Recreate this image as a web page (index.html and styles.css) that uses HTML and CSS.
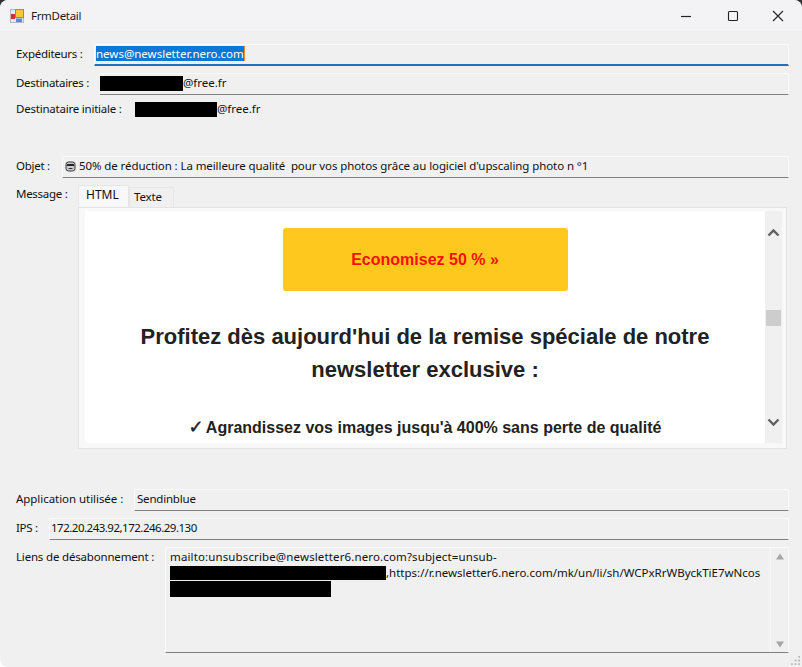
FILE: index.html
```html
<!DOCTYPE html>
<html lang="fr">
<head>
<meta charset="utf-8">
<title>FrmDetail</title>
<link rel="stylesheet" href="styles.css">
</head>
<body>
<div class="window">
  <header class="titlebar">
    <svg class="appicon" width="14" height="14" viewBox="0 0 14 14">
      <rect x="0.500" y="0.500" width="13" height="13" fill="#e8e9ec" stroke="#b4b7bc"/>
      <rect x="5.500" y="0.500" width="8" height="8" fill="#f7c63a" stroke="#b58a1e"/>
      <rect x="1" y="5" width="4" height="5" fill="#c8362e"/>
      <rect x="6" y="9.500" width="6" height="3.500" fill="#5b8bd6"/>
    </svg>
    <span class="title">FrmDetail</span>
    <div class="winbtns">
      <svg width="46" height="16" viewBox="0 0 46 16"><path d="M18 8.500h10" stroke="#222" stroke-width="1.200" fill="none"/></svg>
      <svg width="46" height="16" viewBox="0 0 46 16"><rect x="19.500" y="3.500" width="9" height="9" rx="1" stroke="#222" stroke-width="1.100" fill="none"/></svg>
      <svg width="46" height="16" viewBox="0 0 46 16"><path d="M18 3l10 10M28 3L18 13" stroke="#222" stroke-width="1.100" fill="none"/></svg>
    </div>
  </header>
  <main class="form">
    <div class="row">
      <span class="label label-exp">Expéditeurs :</span>
      <div class="field field-focus"><span class="selected">news@newsletter.nero.com</span></div>
    </div>
    <div class="row row-dest">
      <span class="label label-dest">Destinataires :</span>
      <div class="field field-redacted"><span class="mask mask-dest"></span>@free.fr</div>
    </div>
    <div class="row row-init">
      <span class="label label-init">Destinataire initiale :</span>
      <div class="plain"><span class="mask mask-init"></span>@free.fr</div>
    </div>
    <div class="row row-obj">
      <span class="label label-obj">Objet :</span>
      <div class="field field-obj">
        <svg class="emoji" width="11" height="11" viewBox="0 0 11 11"><rect x="1" y="1" width="9" height="9" rx="2.500" fill="#c9ccd0" stroke="#333"/><path d="M2 4h7" stroke="#222" stroke-width="2"/><path d="M3.500 7.500h4" stroke="#333"/></svg>
        <span>50% de réduction : La meilleure qualité&nbsp; pour vos photos grâce au logiciel d'upscaling photo n °1</span>
      </div>
    </div>
    <div class="row row-msg">
      <span class="label label-msg">Message :</span>
      <div class="tabs">
        <div class="tabstrip">
          <span class="tab tab-active">HTML</span>
          <span class="tab">Texte</span>
        </div>
        <div class="tabpanel">
          <div class="browser">
            <div class="mail">
              <div class="cta">Economisez 50 % »</div>
              <h1 class="headline">Profitez dès aujourd'hui de la remise spéciale de notre newsletter exclusive :</h1>
              <p class="point"><span class="check">✓</span> Agrandissez vos images jusqu'à 400% sans perte de qualité</p>
            </div>
            <div class="vscroll">
              <svg width="17" height="12" viewBox="0 0 17 12"><path d="M3.500 8.500l5-5 5 5" stroke="#606060" stroke-width="2.400" fill="none"/></svg>
              <div class="thumb"></div>
              <svg width="17" height="12" viewBox="0 0 17 12"><path d="M3.500 3.500l5 5 5-5" stroke="#606060" stroke-width="2.400" fill="none"/></svg>
            </div>
          </div>
        </div>
      </div>
    </div>
    <div class="row row-app">
      <span class="label label-app">Application utilisée :</span>
      <div class="field field-app">Sendinblue</div>
    </div>
    <div class="row row-ips">
      <span class="label label-ips">IPS :</span>
      <div class="field field-ips">172.20.243.92,172.246.29.130</div>
    </div>
    <div class="row row-links">
      <span class="label label-links">Liens de désabonnement :</span>
      <div class="field field-multi">
        <div class="multitext">
          <div class="mailto">mailto:unsubscribe@newsletter6.nero.com?subject=unsub-</div>
          <div class="linkline"><span class="mask mask-l1"></span>,https://r.newsletter6.nero.com/mk/un/li/sh/WCPxRrWByckTiE7wNcos</div>
          <div class="maskline"><span class="mask mask-l2"></span></div>
        </div>
        <div class="miniscroll">
          <svg width="10" height="7" viewBox="0 0 10 7"><path d="M5 .5l4 6H1z" fill="#a6a6a6"/></svg>
          <svg width="10" height="7" viewBox="0 0 10 7"><path d="M5 6.500L1 .5h8z" fill="#a6a6a6"/></svg>
        </div>
      </div>
    </div>
    <svg class="grip" width="9" height="9" viewBox="0 0 10 10"><path d="M8 0h2v2H8zM8 4h2v2H8zM4 4h2v2H4zM8 8h2v2H8zM4 8h2v2H4zM0 8h2v2H0z" fill="#b8b8b8"/></svg>
  </main>
</div>
</body>
</html>
```
FILE: styles.css
```css
* { box-sizing: border-box; }
html, body { margin: 0; padding: 0; height: 100%; }
body { background: linear-gradient(#333 0 50%, #fff 50%); font-family: "Noto Sans", "Open Sans", sans-serif; font-size: 11.500px; color: #111; overflow: hidden; }
.window { width: 802px; height: 667px; background: #f0f0f0; border-radius: 8px 8px 0 8px; overflow: hidden; display: flex; flex-direction: column; }
.titlebar { height: 31px; background: #f3f3f6; display: flex; align-items: center; padding: 0 1px 0 10px; flex: none; }
.appicon { flex: none; }
.title { margin-left: 7px; font-size: 11.500px; letter-spacing: -0.3px; color: #1a1a1a; }
.winbtns { margin-left: auto; display: flex; }
.winbtns svg { display: block; }
.form { padding: 13px 13px 0 16px; display: flex; flex-direction: column; flex: 1; position: relative; }
.row { display: flex; align-items: flex-start; }
.label { flex: none; line-height: 16px; padding-top: 2px; white-space: nowrap; letter-spacing: -0.28px; }
.label-exp { width: 78px; }
.label-dest { width: 84px; }
.label-init { width: 119px; padding-top: 1px; letter-spacing: -0.22px; }
.label-obj { width: 46px; }
.label-msg { width: 62px; padding-top: 1px; }
.label-app { width: 118px; letter-spacing: -0.05px; }
.label-ips { width: 33px; }
.label-links { width: 149px; letter-spacing: -0.18px; }
.row-dest { margin-top: 7px; }
.row-init { margin-top: 5px; height: 22px; }
.row-obj { margin-top: 34px; }
.row-msg { margin-top: 7px; }
.row-app { margin-top: 40px; }
.row-ips { margin-top: 7px; }
.row-links { margin-top: 7px; }
.field { flex: 1; height: 22px; padding: 0 2px 4px 1px; background: #f0f0f0; border: 1px solid #fafafa; border-bottom: 1px solid #808080; white-space: nowrap; overflow: hidden; display: flex; align-items: center; border-radius: 2px 2px 0 0; }
.field-focus { border-bottom: 2px solid #1a72c4; padding-bottom: 3px; }
.field-redacted { padding-left: 0; border-left: 0; }
.field-obj { letter-spacing: -0.09px; }
.field-app { letter-spacing: -0.2px; padding-left: 2px; }
.field-ips { letter-spacing: -0.5px; }
.selected { background: #0a78d7; color: #fff; box-shadow: 1px 0 0 #f08a24; line-height: 15px; }
.plain { line-height: 18px; display: flex; align-items: center; }
.mask { display: inline-block; background: #000; flex: none; }
.mask-dest { width: 83px; height: 15px; margin-top: 2px; }
.mask-init { width: 82px; height: 15px; }
.mask-l1 { width: 216px; height: 14px; }
.mask-l2 { width: 161px; height: 16px; display: block; }
.emoji { margin: 2px 3px 0 1px; flex: none; }
.tabs { flex: 1; display: flex; flex-direction: column; margin-right: 2px; }
.tabstrip { display: flex; align-items: flex-end; height: 22px; }
.tab { height: 20px; line-height: 18px; padding: 0 0 0 4px; background: #f0f0f0; border: 1px solid #e6e6e6; border-bottom: 0; width: 45px; letter-spacing: -0.15px; }
.tab-active { height: 22px; line-height: 18px; background: #f8f8f8; width: 51px; padding-left: 7px; font-size: 12px; letter-spacing: 0; }
.tabpanel { height: 242px; background: #f8f8f8; border: 1px solid #e4e4e4; padding: 3px 4px 5px 6px; }
.browser { display: flex; height: 232px; background: #fff; }
.mail { width: 680px; height: 232px; overflow: hidden; text-align: center; font-family: "Liberation Sans", Arial, sans-serif; color: #222; }
.cta { width: 285px; height: 63px; margin: 17px auto 0; background: #ffc81e; border-radius: 3px; color: #f90f0f; font-size: 16px; font-weight: bold; line-height: 63px; }
.headline { width: 640px; margin: 29px auto 0; font-size: 22px; line-height: 33px; font-weight: bold; }
.point { margin: 30px 0 0; font-size: 16px; line-height: 24px; font-weight: bold; color: #222; white-space: nowrap; }
.check { display: inline-block; width: 13.400px; font-family: "DejaVu Sans", sans-serif; font-size: 18px; line-height: 1; -webkit-text-stroke: 0.5px #222; }
.vscroll { width: 17px; height: 232px; background: #f0f0f0; display: flex; flex-direction: column; align-items: center; padding-top: 16px; }
.vscroll svg { display: block; flex: none; }
.thumb { width: 15px; height: 16px; background: #cdcdcd; margin: 71px 0 90px; flex: none; }
.field-multi { height: 106px; padding: 0 0 0 4px; align-items: stretch; }
.multitext { flex: 1; line-height: 16px; padding-top: 1px; }
.mailto { letter-spacing: 0.13px; }
.linkline { display: flex; align-items: center; height: 16px; }
.maskline { height: 16px; }
.miniscroll { width: 18px; border-left: 1px solid #f8f8f8; display: flex; flex-direction: column; align-items: center; justify-content: space-between; padding: 5px 0 4px; }
.miniscroll svg { display: block; }
.grip { position: absolute; right: 2px; bottom: 2px; }
```
